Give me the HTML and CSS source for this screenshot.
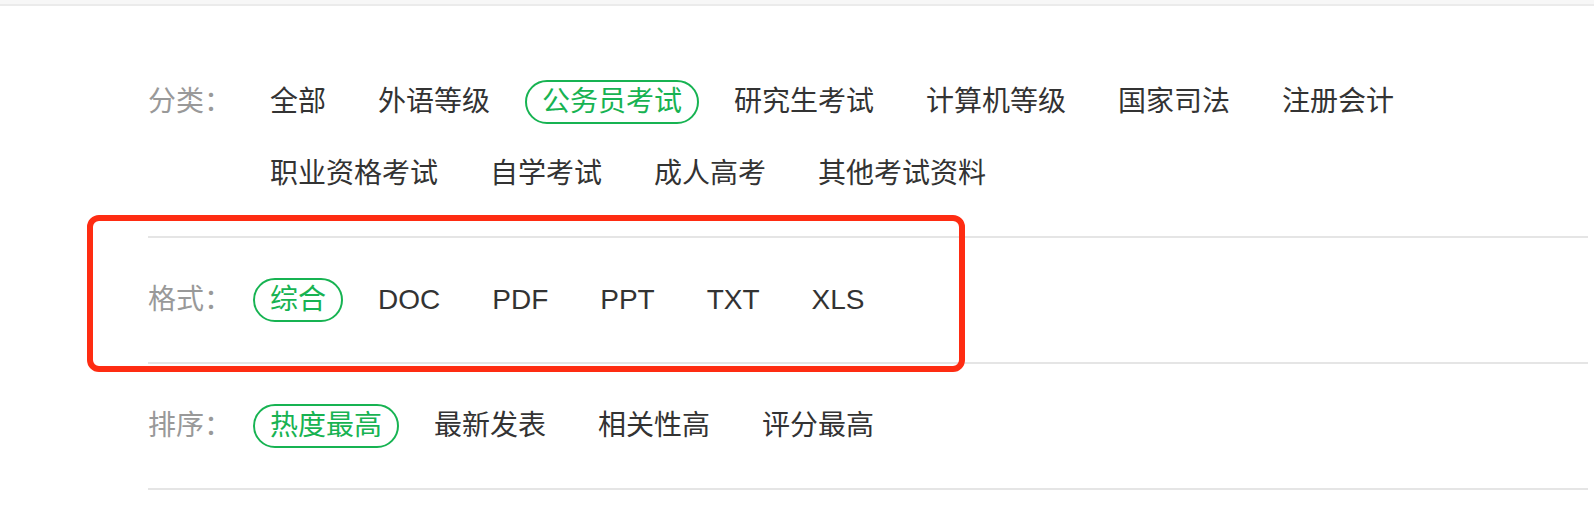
FILE: index.html
```html
<!DOCTYPE html>
<html lang="zh-CN">
<head>
    <meta charset="UTF-8">
    <meta name="viewport" content="width=device-width, initial-scale=1.0">
    <title>文库筛选</title>
    <link rel="stylesheet" href="styles.css">
</head>
<body>

<div class="top-bar"></div>

<div class="filter-container">
    <div class="filter-row first">
        <span class="filter-label">分类：</span>
        <ul class="filter-items">
            <li>全部</li>
            <li>外语等级</li>
            <li class="active">公务员考试</li>
            <li>研究生考试</li>
            <li>计算机等级</li>
            <li>国家司法</li>
            <li>注册会计</li>
            <li>职业资格考试</li>
            <li>自学考试</li>
            <li>成人高考</li>
            <li>其他考试资料</li>
        </ul>
    </div>
    <div class="filter-row">
        <span class="filter-label">格式：</span>
        <ul class="filter-items">
            <li class="active">综合</li>
            <li>DOC</li>
            <li>PDF</li>
            <li>PPT</li>
            <li>TXT</li>
            <li>XLS</li>
        </ul>
    </div>
    <div class="filter-row">
        <span class="filter-label">排序：</span>
        <ul class="filter-items">
            <li class="active">热度最高</li>
            <li>最新发表</li>
            <li>相关性高</li>
            <li>评分最高</li>
        </ul>
    </div>
</div>

<div class="highlight-box"></div>

</body>
</html>
```

FILE: styles.css
```css
body {
    font-family: 'Liberation Sans', 'Noto Sans CJK SC', sans-serif;
    background-color: #fff;
    color: #333;
    margin: 0;
    padding: 0;
    position: relative;
}
.top-bar {
    height: 4px;
    background-color: #f7f7f7;
    border-bottom: 2px solid #ebebeb;
}
.filter-container {
    margin-left: 148px;
    width: 1440px;
}
.filter-row {
    display: flex;
    align-items: flex-start;
    padding: 40px 0;
    border-bottom: 2px solid #e5e5e5;
}
.filter-row.first {
    padding-top: 74px;
}
.filter-label {
    flex: 0 0 105px;
    font-size: 28px;
    line-height: 44px;
    color: #999;
}
.filter-items {
    display: flex;
    flex-wrap: wrap;
    row-gap: 28px;
    column-gap: 18px;
    margin: 0;
    padding: 0;
    list-style: none;
    flex: 1;
}
.filter-items li {
    font-size: 28px;
    line-height: 40px;
    padding: 0 15px;
    border: 2px solid transparent;
    border-radius: 22px;
    color: #333;
    cursor: pointer;
    white-space: nowrap;
}
.filter-items li.active {
    color: #17b352;
    border-color: #17b352;
}
.highlight-box {
    position: absolute;
    left: 87px;
    top: 215px;
    width: 866px;
    height: 145px;
    border: 6px solid #fe2c12;
    border-radius: 12px;
    pointer-events: none;
}
```
